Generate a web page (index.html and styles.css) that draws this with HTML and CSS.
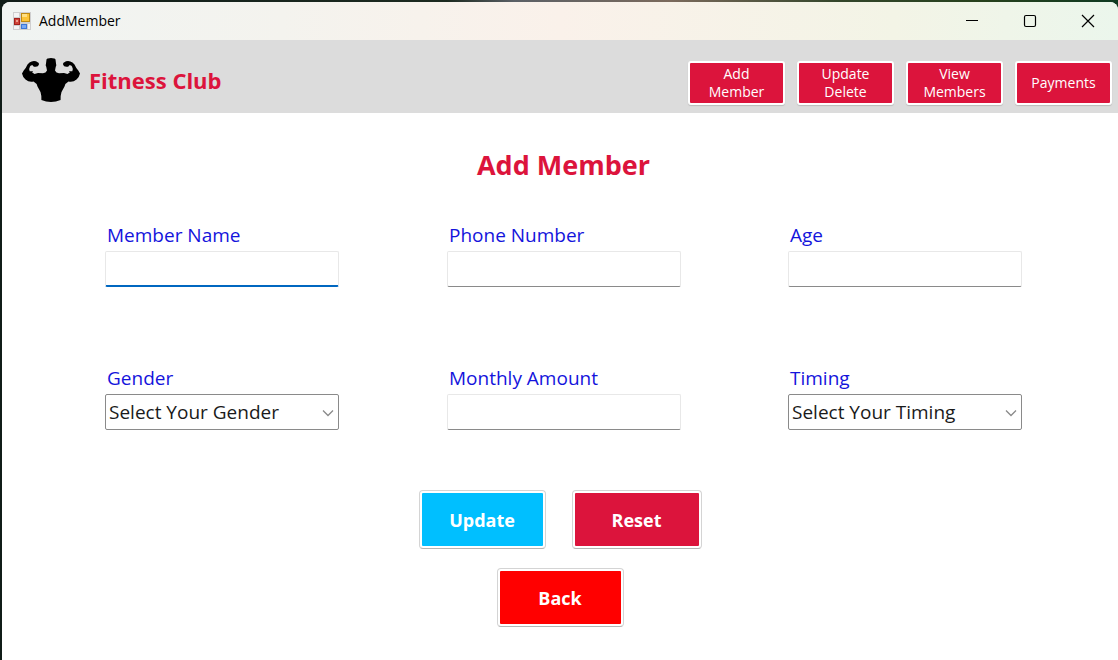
FILE: index.html
```html
<!DOCTYPE html>
<html lang="en">
<head>
<meta charset="utf-8">
<title>AddMember</title>
<link rel="stylesheet" href="styles.css">
</head>
<body>
<div class="window">
  <div class="titlebar">
    <svg class="app-icon" viewBox="0 0 18 18" aria-hidden="true">
      <rect width="18" height="18" fill="#cfcfcf"/>
      <rect x="1" y="1" width="5" height="4" fill="#f4f4f4"/>
      <rect x="1" y="14" width="5" height="3" fill="#f4f4f4"/>
      <rect x="15" y="12" width="2" height="5" fill="#f4f4f4"/>
      <rect x="8" y="1" width="9" height="9" fill="#c08a10"/>
      <rect x="9" y="2" width="7" height="7" fill="#fcc437"/>
      <rect x="9" y="2" width="5" height="3" fill="#ffe083"/>
      <rect x="1" y="6" width="6" height="7" fill="#a3211c"/>
      <rect x="2" y="7" width="4" height="5" fill="#d0453a"/>
      <rect x="3" y="8" width="2" height="2" fill="#f0a090"/>
      <rect x="8" y="12" width="6" height="5" fill="#3d78d8"/>
      <rect x="9" y="13" width="4" height="3" fill="#78a9f5"/>
    </svg>
    <span class="window-title">AddMember</span>
    <div class="window-controls">
      <button class="window-button" type="button" aria-label="Minimize">
        <svg class="glyph" viewBox="0 0 14 14"><path d="M1 6.500H13"/></svg>
      </button>
      <button class="window-button" type="button" aria-label="Maximize">
        <svg class="glyph" viewBox="0 0 14 14"><rect x="1.500" y="1.500" width="11" height="11" rx="1.500"/></svg>
      </button>
      <button class="window-button" type="button" aria-label="Close">
        <svg class="glyph" viewBox="0 0 14 14"><path d="M1 1L13 13M13 1L1 13"/></svg>
      </button>
    </div>
  </div>

  <header class="header">
    <div class="brand">
      <svg class="logo" viewBox="0 0 60 46" aria-hidden="true">
        <path d="M25.500 2.500Q26 1 30 1T34.500 2.500L35 6.500Q35.800 8 34.700 10L34 13.500Q35 16 38 16.200L43 16L46.500 17L49 15.300Q47.500 14.800 48.200 14.200L51.300 14.300Q52.500 12 51 9.500Q50 7.800 48.300 8.300L47.200 9.800Q45.200 9.800 43.200 9.200Q41.500 8 42.200 6L45 4.200Q48.500 3.200 51.500 5.600L53.500 7.500Q55 11 57.300 13.500L59 16.500Q58.500 19.500 55.500 22.500Q52 25.500 47.500 24.500Q44.500 26 43.500 29.500L40.500 35Q39.500 38 39.600 43Q35 45 30 45T20.400 43Q20.500 38 19.500 35L16.500 29.500Q15.500 26 12.500 24.500Q8 25.500 4.500 22.500Q1.500 19.500 1 16.500L2.700 13.500Q5 11 6.500 7.500L8.500 5.600Q11.500 3.200 15 4.200L17.800 6Q18.500 8 16.800 9.200Q14.800 9.800 12.800 9.800L11.700 8.300Q10 7.800 9 9.500Q7.500 12 8.700 14.300L11.800 14.200Q12.500 14.800 11 15.300L13.500 17L17 16L22 16.200Q25 16 26 13.500L25.300 10Q24.200 8 25 6.500Z"/>
      </svg>
      <span class="brand-name">Fitness Club</span>
    </div>
    <nav class="nav">
      <button class="nav-button" type="button">Add<br>Member</button>
      <button class="nav-button" type="button">Update<br>Delete</button>
      <button class="nav-button" type="button">View<br>Members</button>
      <button class="nav-button" type="button">Payments</button>
    </nav>
  </header>

  <main class="main">
    <h1 class="page-title">Add Member</h1>
    <form class="form">
      <div class="fields">
        <div class="field">
          <label class="label" for="name">Member Name</label>
          <input class="input input-active" id="name" type="text">
        </div>
        <div class="field">
          <label class="label" for="phone">Phone Number</label>
          <input class="input" id="phone" type="text">
        </div>
        <div class="field">
          <label class="label" for="age">Age</label>
          <input class="input" id="age" type="text">
        </div>
        <div class="field">
          <label class="label" for="gender">Gender</label>
          <div class="select-box">
            <select class="select" id="gender"><option>Select Your Gender</option></select>
            <svg class="chevron" viewBox="0 0 12 8" aria-hidden="true"><path d="M1 1.500L6 6.500L11 1.500"/></svg>
          </div>
        </div>
        <div class="field">
          <label class="label" for="amount">Monthly Amount</label>
          <input class="input" id="amount" type="text">
        </div>
        <div class="field">
          <label class="label" for="timing">Timing</label>
          <div class="select-box">
            <select class="select" id="timing"><option>Select Your Timing</option></select>
            <svg class="chevron" viewBox="0 0 12 8" aria-hidden="true"><path d="M1 1.500L6 6.500L11 1.500"/></svg>
          </div>
        </div>
      </div>
      <div class="actions">
        <div class="action-row">
          <button class="action update" type="button">Update</button>
          <button class="action reset" type="reset">Reset</button>
        </div>
        <button class="action back" type="button">Back</button>
      </div>
    </form>
  </main>
</div>
</body>
</html>
```
FILE: styles.css
```css
* {
  box-sizing: border-box;
}

body {
  margin: 0;
  padding: 2px 0 0 2px;
  min-height: 100vh;
  display: flex;
  background: linear-gradient(90deg, #101c18 0%, #1c2a20 40%, #5b6066 46%, #7b6a5c 60%, #33452a 75%, #26401c 88%, #0f3a22 100%);
  font-family: "Open Sans", "Noto Sans", sans-serif;
}

button,
input,
select {
  font-family: inherit;
}

.window {
  flex: 1;
  background: #fff;
  border-radius: 8px 8px 0 0;
  overflow: hidden;
}

.titlebar {
  display: flex;
  align-items: center;
  height: 38px;
  padding: 0 1px 0 11px;
  background: linear-gradient(90deg, #f0f4f2 0%, #f4f3ee 25%, #faf1ea 50%, #f3f4e6 80%, #ebf6ec 100%);
}

.app-icon {
  width: 18px;
  height: 18px;
}

.window-title {
  margin-left: 8px;
  font-size: 14px;
  line-height: 20px;
  color: #000;
}

.window-controls {
  display: flex;
  align-self: stretch;
  margin-left: auto;
}

.window-button {
  display: flex;
  align-items: center;
  justify-content: center;
  width: 58px;
  padding: 0;
  border: 0;
  background: none;
}

.glyph {
  width: 14px;
  height: 14px;
  fill: none;
  stroke: #000;
  stroke-width: 1.2;
}

.header {
  display: flex;
  align-items: center;
  justify-content: space-between;
  height: 73px;
  padding: 13px 6px 0 19px;
  background: #dcdcdc;
}

.brand {
  display: flex;
  align-items: center;
  gap: 8px;
  padding-bottom: 6px;
}

.logo {
  width: 60px;
  height: 46px;
}

.brand-name {
  font-size: 22px;
  line-height: 30px;
  font-weight: 700;
  color: #dc143c;
}

.nav {
  display: flex;
  gap: 12px;
}

.nav-button {
  width: 97px;
  height: 44px;
  padding: 0;
  border: 2px solid #fff;
  border-radius: 3px;
  background: #dc143c;
  box-shadow: 0 1px 1px #bbb;
  font-size: 14px;
  line-height: 18px;
  color: #fff;
}

.main {
  padding: 32px 0;
}

.page-title,
.fields {
  padding: 0 96px 0 103px;
}

.page-title {
  margin: 0;
  font-size: 27px;
  line-height: 40px;
  font-weight: 700;
  text-align: center;
  color: #dc143c;
}

.fields {
  display: grid;
  grid-template-columns: 342fr 341fr 234fr;
  row-gap: 77px;
  margin-top: 36px;
}

.field {
  display: flex;
  flex-direction: column;
  gap: 2px;
  width: 234px;
}

.label {
  padding-left: 2px;
  font-size: 19px;
  line-height: 28px;
  color: #1414dc;
}

.input {
  width: 100%;
  height: 36px;
  padding: 0 4px;
  border: 1px solid #e8e8e8;
  border-bottom: 1px solid #8a8a8a;
  border-radius: 2px;
  outline: 0;
  background: #fff;
  font-size: 19px;
}

.input-active {
  border-bottom: 2px solid #0067c0;
}

.select-box {
  position: relative;
}

.select {
  display: block;
  width: 100%;
  height: 36px;
  padding: 0 28px 0 3px;
  border: 1px solid #8a8a8a;
  border-radius: 2px;
  appearance: none;
  background: #fff;
  font-size: 19px;
  color: #1a1a1a;
}

.chevron {
  position: absolute;
  top: 15px;
  right: 5px;
  width: 12px;
  height: 8px;
  fill: none;
  stroke: #8a8a8a;
  stroke-width: 1.3;
  pointer-events: none;
}

.actions {
  display: flex;
  flex-direction: column;
  align-items: center;
  gap: 19px;
  margin-top: 60px;
}

.action-row {
  display: flex;
  gap: 26px;
}

.action {
  width: 127px;
  height: 59px;
  padding: 2px;
  border: 1px solid #d4d4d4;
  border-bottom-color: #b4b4b4;
  border-radius: 4px;
  background-clip: content-box;
  font-size: 18px;
  font-weight: 700;
  color: #fff;
}

.update {
  background-color: #00bfff;
}

.reset {
  width: 130px;
  background-color: #dc143c;
}

.back {
  background-color: #f00;
}
```
